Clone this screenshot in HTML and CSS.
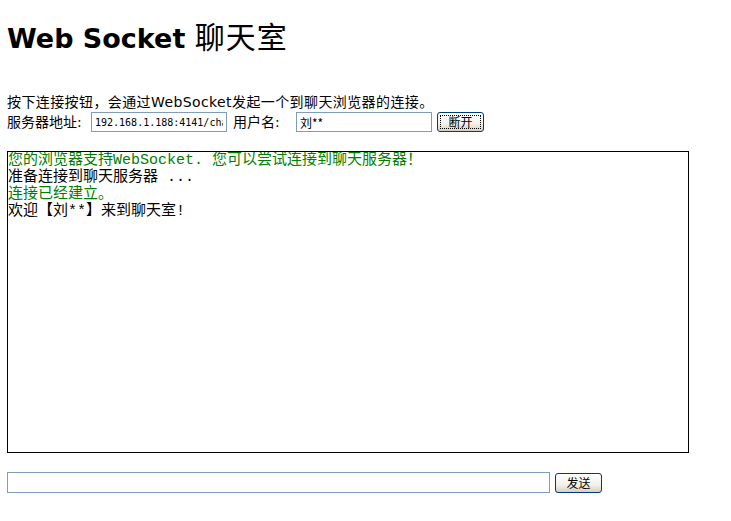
FILE: index.html
```html
<!DOCTYPE html>
<html lang="zh-CN">
<head>
    <meta charset="UTF-8">
    <title>Web Socket 聊天室</title>
    <link rel="stylesheet" href="styles.css">
</head>
<body>

    <h1 class="title">Web Socket <span class="title-cn">聊天室</span></h1>

    <div class="intro">按下连接按钮，会通过WebSocket发起一个到聊天浏览器的连接。</div>
    <div class="connect-row">
        <span class="label label-url">服务器地址:</span>
        <input class="field field-url" type="text" value="192.168.1.188:4141/chat">
        <span class="label label-user">用户名:</span>
        <input class="field field-user" type="text" value="刘**">
        <button class="btn btn-focus">断开</button>
    </div>

    <div class="chat-log" id="chat-log">
        <div class="msg msg-info">您的浏览器支持WebSocket. 您可以尝试连接到聊天服务器！</div>
        <div class="msg">准备连接到聊天服务器 ...</div>
        <div class="msg msg-info">连接已经建立。</div>
        <div class="msg">欢迎【刘**】来到聊天室!</div>
    </div>

    <div class="send-row">
        <input class="field field-msg" type="text">
        <button class="btn">发送</button>
    </div>

</body>
</html>
```

FILE: styles.css
```css
body {
    margin: 8px 7px;
    font-family: "DejaVu Sans", "Noto Sans CJK SC", sans-serif;
    font-size: 14px;
    line-height: 17px;
    color: #000;
    background: #fff;
}

.title {
    margin: 12px 0 0 0;
    font-size: 27px;
    line-height: 34px;
    font-weight: bold;
}

.title-cn {
    font-family: "Noto Sans CJK SC", sans-serif;
    font-size: 30px;
    font-weight: normal;
    line-height: 1;
    letter-spacing: 1px;
}

.intro {
    margin-top: 38px;
    letter-spacing: 0.4px;
}

.connect-row {
    display: flex;
    align-items: center;
    height: 22px;
}

.label {
    white-space: nowrap;
}

.label-url {
    width: 84px;
}

.label-user {
    width: 63px;
    margin-left: 6px;
}

.field {
    box-sizing: border-box;
    height: 20px;
    margin: 0;
    padding: 0 3px;
    border: 1px solid #7f9db9;
    background: #fff;
    font-family: "DejaVu Sans Mono", "Noto Sans CJK SC", monospace;
    font-size: 10px;
    color: #000;
    outline: none;
}

.field-url,
.field-user {
    width: 136px;
}

.field-user {
    font-family: "Noto Sans CJK SC", sans-serif;
    font-size: 12px;
}

.btn {
    box-sizing: border-box;
    width: 47px;
    height: 20px;
    margin: 0 0 0 5px;
    padding: 0;
    border: 1px solid #003c74;
    border-radius: 3px;
    background: linear-gradient(#ffffff, #f3f1ea 60%, #d6d0c5);
    font-family: "Noto Sans CJK SC", sans-serif;
    font-size: 12px;
    line-height: 16px;
    color: #000;
}

.btn-focus {
    outline: 1px dotted #000;
    outline-offset: -4px;
}

.chat-log {
    box-sizing: border-box;
    width: 682px;
    height: 302px;
    margin-top: 18px;
    border: 1px solid #000;
    font-family: "Liberation Mono", "Noto Sans CJK SC", monospace;
    font-size: 15px;
    line-height: 17px;
    overflow: auto;
}

.msg-info {
    color: #008000;
}

.send-row {
    display: flex;
    align-items: center;
    margin-top: 19px;
}

.field-msg {
    width: 543px;
    height: 21px;
}

.send-row .btn {
    margin-left: 5px;
}
```
